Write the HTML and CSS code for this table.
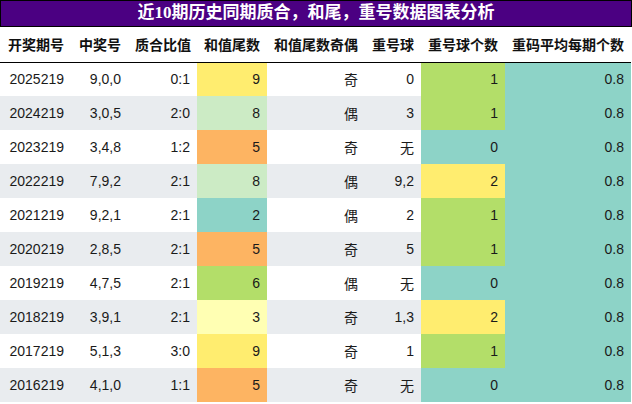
FILE: index.html
```html
<!DOCTYPE html>
<html lang="zh">
<head>
<meta charset="utf-8">
<title>近10期历史同期质合，和尾，重号数据图表分析</title>
<link rel="stylesheet" href="styles.css">
</head>
<body>
<div class="chart">
  <div class="title">近10期历史同期质合，和尾，重号数据图表分析</div>
  <table class="data">
    <colgroup>
      <col class="c1"><col class="c2"><col class="c3"><col class="c4"><col class="c5"><col class="c6"><col class="c7"><col class="c8">
    </colgroup>
    <thead>
      <tr><th>开奖期号</th><th>中奖号</th><th>质合比值</th><th>和值尾数</th><th>和值尾数奇偶</th><th>重号球</th><th>重号球个数</th><th>重码平均每期个数</th></tr>
    </thead>
    <tbody>
      <tr><td>2025219</td><td>9,0,0</td><td>0:1</td><td class="yel">9</td><td class="cjk">奇</td><td>0</td><td class="grn">1</td><td class="teal">0.8</td></tr>
      <tr><td>2024219</td><td>3,0,5</td><td>2:0</td><td class="lgrn">8</td><td class="cjk">偶</td><td>3</td><td class="grn">1</td><td class="teal">0.8</td></tr>
      <tr><td>2023219</td><td>3,4,8</td><td>1:2</td><td class="org">5</td><td class="cjk">奇</td><td class="cjk">无</td><td class="teal">0</td><td class="teal">0.8</td></tr>
      <tr><td>2022219</td><td>7,9,2</td><td>2:1</td><td class="lgrn">8</td><td class="cjk">偶</td><td>9,2</td><td class="yel">2</td><td class="teal">0.8</td></tr>
      <tr><td>2021219</td><td>9,2,1</td><td>2:1</td><td class="teal">2</td><td class="cjk">偶</td><td>2</td><td class="grn">1</td><td class="teal">0.8</td></tr>
      <tr><td>2020219</td><td>2,8,5</td><td>2:1</td><td class="org">5</td><td class="cjk">奇</td><td>5</td><td class="grn">1</td><td class="teal">0.8</td></tr>
      <tr><td>2019219</td><td>4,7,5</td><td>2:1</td><td class="grn">6</td><td class="cjk">偶</td><td class="cjk">无</td><td class="teal">0</td><td class="teal">0.8</td></tr>
      <tr><td>2018219</td><td>3,9,1</td><td>2:1</td><td class="lyel">3</td><td class="cjk">奇</td><td>1,3</td><td class="yel">2</td><td class="teal">0.8</td></tr>
      <tr><td>2017219</td><td>5,1,3</td><td>3:0</td><td class="yel">9</td><td class="cjk">奇</td><td>1</td><td class="grn">1</td><td class="teal">0.8</td></tr>
      <tr><td>2016219</td><td>4,1,0</td><td>1:1</td><td class="org">5</td><td class="cjk">奇</td><td class="cjk">无</td><td class="teal">0</td><td class="teal">0.8</td></tr>
    </tbody>
  </table>
</div>
</body>
</html>
```

FILE: styles.css
```css
html, body {
  margin: 0;
  padding: 0;
  background: #ffffff;
}

.chart {
  width: 632px;
  font-family: "Liberation Sans", "Noto Sans CJK SC", sans-serif;
  color: #1a1a1a;
}

.title {
  box-sizing: border-box;
  height: 27px;
  width: 632px;
  border: 1px solid #000000;
  background: #4b0082;
  color: #ffffff;
  font-family: "Liberation Serif", "Noto Sans CJK SC", serif;
  font-weight: bold;
  font-size: 17px;
  line-height: 24px;
  text-align: center;
}

.data {
  border-collapse: collapse;
  table-layout: fixed;
  width: 631px;
  font-size: 14px;
}

.c1 { width: 71px; }
.c2 { width: 57px; }
.c3 { width: 69px; }
.c4 { width: 70px; }
.c5 { width: 98px; }
.c6 { width: 56px; }
.c7 { width: 84px; }
.c8 { width: 126px; }

.data th {
  height: 35px;
  padding: 0 7px;
  box-sizing: border-box;
  font-family: "Noto Sans CJK SC", sans-serif;
  font-weight: bold;
  font-size: 14px;
  color: #111111;
  text-align: right;
  white-space: nowrap;
  border-bottom: 1px solid #000000;
  background: #ffffff;
}

.data td {
  height: 34px;
  padding: 0 7px;
  box-sizing: border-box;
  text-align: right;
  white-space: nowrap;
}

.data td.cjk {
  font-family: "Noto Sans CJK SC", sans-serif;
}

.data tbody tr:nth-child(even) td {
  background: #e9ecef;
}

.data tbody tr td.teal { background: #8dd3c7; }
.data tbody tr td.yel { background: #ffed6f; }
.data tbody tr td.lyel { background: #ffffb3; }
.data tbody tr td.grn { background: #b3de69; }
.data tbody tr td.lgrn { background: #ccebc5; }
.data tbody tr td.org { background: #fdb462; }
```
